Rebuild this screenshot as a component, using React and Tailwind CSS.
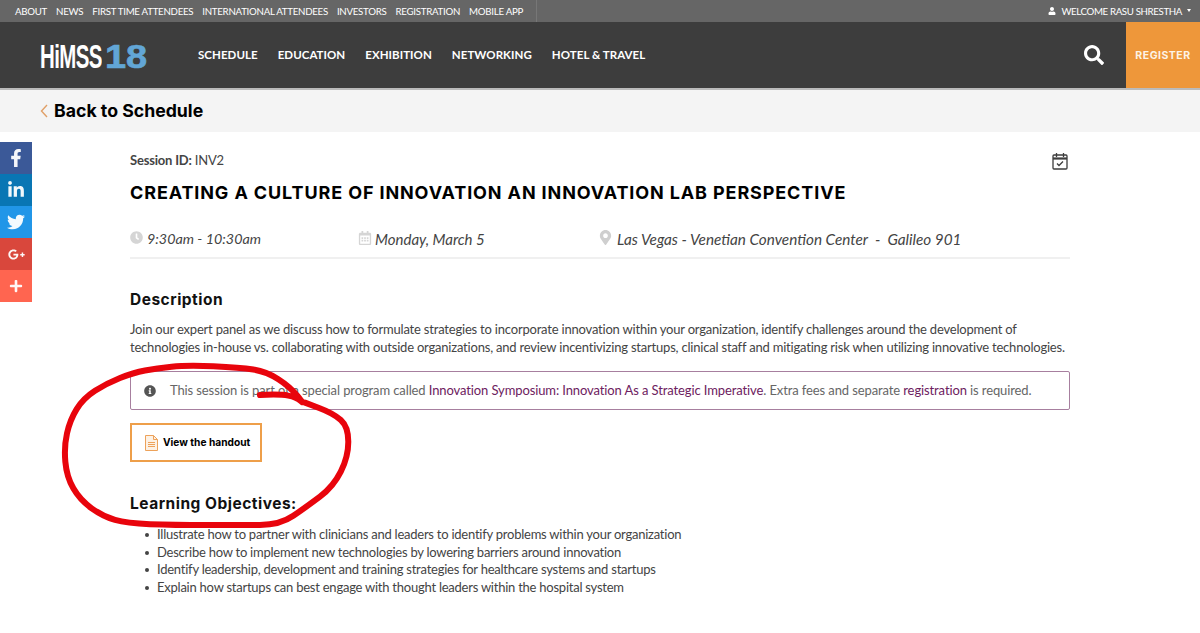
import React from "react";
import { FaFacebookF, FaLinkedinIn, FaTwitter, FaGooglePlusG, FaPlus, FaSearch, FaUser, FaInfoCircle, FaClock, FaMapMarkerAlt, FaRegCalendarAlt } from "react-icons/fa";

const top = ["ABOUT", "NEWS", "FIRST TIME ATTENDEES", "INTERNATIONAL ATTENDEES", "INVESTORS", "REGISTRATION", "MOBILE APP"];
const nav = ["SCHEDULE", "EDUCATION", "EXHIBITION", "NETWORKING", "HOTEL & TRAVEL"];
const social = [
  [FaFacebookF, "bg-[#3b5998]", "text-[18px]"],
  [FaLinkedinIn, "bg-[#0976b4]", "text-[18px]"],
  [FaTwitter, "bg-[#2196e8]", "text-[18px]"],
  [FaGooglePlusG, "bg-[#d9473c]", "text-[17px]"],
  [FaPlus, "bg-[#ff6550]", "text-[14px]"],
];
const objectives = [
  "Illustrate how to partner with clinicians and leaders to identify problems within your organization",
  "Describe how to implement new technologies by lowering barriers around innovation",
  "Identify leadership, development and training strategies for healthcare systems and startups",
  "Explain how startups can best engage with thought leaders within the hospital system",
];
const loop = [[660,105],[720,102],[770,112],[795,135],[750,80],[680,35],[600,22],[440,15],[350,25],[280,38],[200,70],[130,115],[90,180],[72,260],[80,350],[120,420],[190,470],[260,490],[400,495],[600,495],[720,495],[800,440],[880,380],[925,290],[925,200],[880,160],[795,128]];
const smooth = (p) => {
  let d = `M${p[0][0]} ${p[0][1]}`;
  for (let i = 1; i < p.length - 1; i++) {
    const mx = (p[i][0] + p[i + 1][0]) / 2;
    const my = (p[i][1] + p[i + 1][1]) / 2;
    d += ` Q${p[i][0]} ${p[i][1]} ${mx} ${my}`;
  }
  const l = p[p.length - 1];
  return d + ` L${l[0]} ${l[1]}`;
};

export default function App() {
  return (
    <div className="relative h-[633px] w-[1200px] overflow-hidden bg-white font-['Lato','Liberation_Sans',sans-serif] text-[#444]">
      <div className="flex h-[22px] items-center justify-between bg-[#666666] text-[9.7px] tracking-[-0.27px] text-white">
        <div className="flex h-full items-center gap-[9px] border-r border-[#777] pl-[15px] pr-[13px]">
          {top.map((t) => <span key={t}>{t}</span>)}
        </div>
        <div className="flex items-center gap-[5px] pr-[9px]">
          <FaUser className="text-[8px]" />
          <span className="tracking-[-0.36px]">WELCOME RASU SHRESTHA</span>
          <span className="h-0 w-0 border-x-[2.5px] border-t-[3px] border-x-transparent border-t-white" />
        </div>
      </div>
      <header className="flex h-[68px] items-stretch justify-between border-b-2 border-[#bbb] bg-[#3d3d3d] text-white">
        <div className="flex items-center">
          <div className="ml-[40px] mt-[3px] flex w-[108px] items-center font-['Liberation_Sans',sans-serif] font-bold leading-none">
            <span className="inline-block w-[65px] origin-left scale-x-[0.62] text-[33px] tracking-[-1px] whitespace-nowrap">HiMSS</span>
            <span className="inline-block origin-left scale-x-[1.15] text-[33px] text-[#62a6d6] [-webkit-text-stroke:0.6px_#62a6d6]">18</span>
          </div>
          <nav className="ml-[50px] flex gap-[20px] text-[11.5px] font-bold tracking-[0.05px]">
            {nav.map((t) => <span key={t}>{t}</span>)}
          </nav>
        </div>
        <div className="flex items-stretch">
          <div className="mr-[22px] flex items-center"><FaSearch className="text-[20px]" /></div>
          <div className="flex w-[74px] items-center justify-center bg-[#ee973a] pt-[1px] font-['Inter',sans-serif] text-[10.5px] font-bold tracking-[0.5px] text-[#fdf3e6]">REGISTER</div>
        </div>
      </header>
      <div className="flex h-[42px] items-center gap-[6px] bg-[#f4f4f4] pl-[40px]">
        <svg width="8" height="14" viewBox="0 0 8 14" fill="none" stroke="#e0a068" strokeWidth="1.4"><path d="M7 1 1.5 7 7 13" /></svg>
        <span className="font-['Inter',sans-serif] text-[17.7px] font-bold leading-none text-black">Back to Schedule</span>
      </div>

      <aside className="absolute left-0 top-[142px] w-[32px]">
        {social.map(([Icon, bg, size], i) => (
          <div key={i} className={`flex h-[32px] items-center justify-center text-white/95 ${bg} ${size}`}><Icon /></div>
        ))}
      </aside>

      <main className="mx-auto w-[940px]">
        <div className="flex items-start justify-between pt-[20px]">
          <p className="text-[13px] leading-[16px] tracking-[-0.2px]"><span className="font-bold">Session ID:</span> INV2</p>
          <svg className="mr-[2px]" width="16" height="18" viewBox="0 0 16 18" fill="none" stroke="#3d3d3d" strokeWidth="1.3">
            <rect x="1" y="3" width="14" height="14" rx="1" />
            <path d="M1 6.5h14" strokeWidth="2.2" />
            <path d="M4.5 1v4M11.5 1v4" />
            <path d="m5 11.5 2 2 4-4" />
          </svg>
        </div>
        <h1 className="mt-[11px] font-['Inter',sans-serif] text-[18px] font-bold leading-[24px] tracking-[0.88px] text-black whitespace-nowrap">CREATING A CULTURE OF INNOVATION AN INNOVATION LAB PERSPECTIVE</h1>
        <div className="mt-[23px] flex h-[31px] items-start border-b-2 border-[#f0f0f0] italic leading-[22px] text-[#444]">
          <div className="flex w-[228px] items-center gap-[4px] text-[14.3px]"><FaClock className="-mt-[3px] text-[13px] text-[#d5d5d5]" /><span>9:30am - 10:30am</span></div>
          <div className="flex w-[240px] items-center gap-[3px] text-[15px]"><FaRegCalendarAlt className="-mt-[3px] text-[14px] text-[#d5d5d5]" /><span>Monday, March 5</span></div>
          <div className="flex items-center gap-[4px] text-[15.3px]"><FaMapMarkerAlt className="-mt-[3px] text-[15px] text-[#cfcfcf]" /><span>Las Vegas - Venetian Convention Center &nbsp;-&nbsp; Galileo 901</span></div>
        </div>
        <h2 className="mt-[31px] font-['Inter',sans-serif] text-[15.5px] font-bold leading-[20px] tracking-[0.5px] text-[#111]">Description</h2>
        <p className="mt-[10px] text-[13px] leading-[18px] tracking-[-0.2px] text-[#444]">
          Join our expert panel as we discuss how to formulate strategies to incorporate innovation within your organization, identify challenges around the development of technologies in-house vs. collaborating with outside organizations, and review incentivizing startups, clinical staff and mitigating risk when utilizing innovative technologies.
        </p>
        <div className="mt-[15px] flex h-[39px] items-center rounded-[2px] border border-[#a77f9f] pl-[13px] text-[13px] tracking-[-0.11px] text-[#666]">
          <FaInfoCircle className="mr-[14px] text-[12px] text-[#555]" />
          <span>This session is part of a special program called <span className="text-[#6d2160]">Innovation Symposium: Innovation As a Strategic Imperative</span>. Extra fees and separate <span className="text-[#6d2160]">registration</span> is required.</span>
        </div>
        <button className="mt-[13px] flex h-[39px] w-[132px] items-center border-2 border-[#ee9f4a] pl-[13px] font-['Inter',sans-serif] text-[10.2px] font-bold text-black">
          <svg className="mr-[5px]" width="13" height="16" viewBox="0 0 13 16" fill="none" stroke="#eda25a" strokeWidth="1">
            <path d="M.5.5h8l4 4v11H.5z" fill="#fdf1e4" />
            <path d="M8.5.5v4h4M3 7.5h7M3 9.5h7M3 11.5h7" />
          </svg>
          View the handout
        </button>
        <h2 className="mt-[32px] font-['Inter',sans-serif] text-[15.5px] font-bold leading-[20px] tracking-[0.5px] text-[#111]">Learning Objectives:</h2>
        <ul className="mt-[12px] text-[13px] leading-[17.7px] tracking-[-0.24px] text-[#444]">
          {objectives.map((o) => (
            <li key={o} className="flex items-center pl-[15px]">
              <span className="mr-[8px] h-[4px] w-[4px] rounded-full bg-[#444]" />
              <span>{o}</span>
            </li>
          ))}
        </ul>
      </main>

      <svg className="pointer-events-none absolute left-0 top-0" width="1200" height="633" fill="none">
        <g transform="translate(40 360) scale(0.3333)">
          <path d={smooth(loop)} stroke="#e8040c" strokeWidth="18" strokeLinecap="round" strokeLinejoin="round" />
        </g>
      </svg>
    </div>
  );
}
